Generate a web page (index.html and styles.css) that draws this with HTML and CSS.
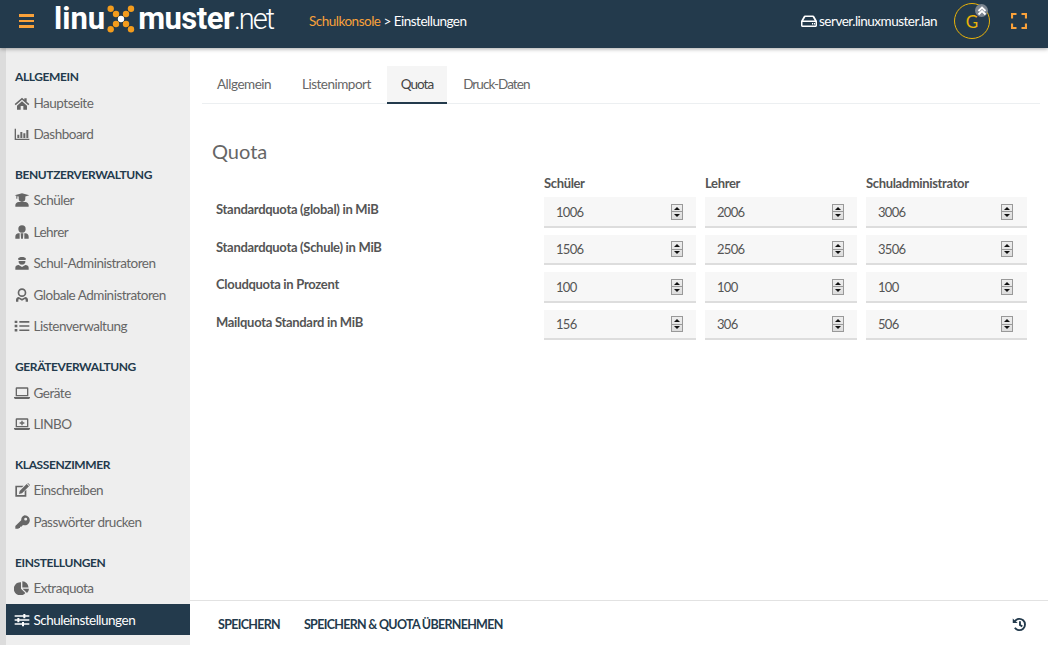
FILE: index.html
```html
<!DOCTYPE html>
<html lang="de">
<head>
<meta charset="utf-8">
<title>Schulkonsole</title>
<link rel="stylesheet" href="styles.css">
</head>
<body>
<svg class="defs" width="0" height="0" aria-hidden="true">
  <symbol id="i-home" viewBox="0 0 24 20"><path d="M12 2 1 11.500l1.500 1.700L12 5l9.500 8.200 1.500-1.700-4-3.500V3h-3.500v2zM4.500 14v6h5.500v-5.500h4V20h5.500v-6L12 7.500z"/></symbol>
  <symbol id="i-chart" viewBox="0 0 24 20"><path d="M1 2h2v15h20v2H1zM5 11h3v5H5zM9.500 7h3v9h-3zM14 9h3v7h-3zM18.500 4h3v12h-3z"/></symbol>
  <symbol id="i-grad" viewBox="0 0 24 20"><path d="M12 0 1 3l2.500.8V8h1.500V4.300l2 .6v3a5 5 0 0 0 10 0v-3L23 3zM2 20v-2c0-3 2.500-5 5-5h10c2.500 0 5 2 5 5v2z"/></symbol>
  <symbol id="i-tie" viewBox="0 0 24 20"><circle cx="12" cy="5.500" r="5.500"/><path d="M2 20v-3c0-3 2-5 5-5h1.500v8zM10 12h4l-.6 8h-2.800zM15.500 12H17c3 0 5 2 5 5v3h-6.500z"/></symbol>
  <symbol id="i-sadm" viewBox="0 0 24 20"><path d="M6 4c1-4 11-4 12 0l-1 1.500H7zM7 7h10c.5 4-2.500 5.500-5 5.500S6.500 11 7 7zM2 20v-3c0-2.500 2-4 5-4l5 3 5-3c3 0 5 1.500 5 4v3z"/></symbol>
  <symbol id="i-gadm" viewBox="0 0 24 20"><path fill-rule="evenodd" d="M12 0a6.500 6.500 0 1 1 0 13 6.500 6.500 0 0 1 0-13zm0 2.500a4 4 0 1 0 0 8 4 4 0 0 0 0-8zM3 20v-3c0-2 1.500-3.500 4-4l5 2.500 5-2.500c2.500.5 4 2 4 4v3h-3.500v-3l-1-1-4.500 2.500L7.500 16l-1 1v3z"/></symbol>
  <symbol id="i-list" viewBox="0 0 24 20"><path d="M1 2h4v3.500H1zM1 8.300h4v3.500H1zM1 14.600h4v3.500H1zM8 2.500h15v2.500H8zM8 8.800h15v2.500H8zM8 15.100h15v2.500H8z"/></symbol>
  <symbol id="i-laptop" viewBox="0 0 24 20"><path fill-rule="evenodd" d="M4 1.500h16a1.500 1.500 0 0 1 1.500 1.500v12h-19V3A1.500 1.500 0 0 1 4 1.500zm.5 2v9.500h15V3.500zM0 16h24v1.500L22.500 19h-21L0 17.500z"/></symbol>
  <symbol id="i-linbo" viewBox="0 0 24 20"><path fill-rule="evenodd" d="M4 1.500h16a1.500 1.500 0 0 1 1.500 1.500v12h-19V3A1.500 1.500 0 0 1 4 1.500zm.5 2v9.500h15V3.500zM0 16h24v1.500L22.500 19h-21L0 17.500zM11 5h2v2.500h2.500v2H13V12h-2V9.500H8.500v-2H11z"/></symbol>
  <symbol id="i-edit" viewBox="0 0 24 20"><path d="M2 3.500h12.500l-2.500 2.500H4.500v11.500H16V12l2.500-2.500V20H2zM19 1l3.500 3.500L12 15l-4.500 1 1-4.500zM20 0l1-.5 3.300 3.300-.8 1z"/></symbol>
  <symbol id="i-key" viewBox="0 0 24 20"><path fill-rule="evenodd" d="M16 0a7.500 7.500 0 1 1-2.500 14.500L11 17H9v2H7v1H2v-4l8.800-8.800A7.500 7.500 0 0 1 16 0zm1.500 3.500a2.200 2.200 0 1 0 0 4.400 2.200 2.200 0 0 0 0-4.400z"/></symbol>
  <symbol id="i-pie" viewBox="0 0 24 20"><path d="M10.500 1.500V11l6.500 6.500A9.800 9.800 0 1 1 10.500 1.500zM12.500 0a9.300 9.300 0 0 1 9.300 9.300h-9.300zM13 11h9.500a9.800 9.800 0 0 1-3 6.500z"/></symbol>
  <symbol id="i-sliders" viewBox="0 0 24 20"><path d="M1 3h13V1h3v2h6v2.200h-6v2h-3v-2H1zM1 9h4V7h3v2h15v2.200H8v2H5v-2H1zM1 15h11v-2h3v2h8v2.200h-8v2h-3v-2H1z"/></symbol>
  <symbol id="i-dot" viewBox="0 0 24 20"><circle cx="12" cy="10" r="10"/></symbol>
</svg>

<header class="topbar">
  <div class="burger" aria-label="Menü"><span></span><span></span><span></span></div>
  <div class="logo">
    <span class="logo-bold">linu</span>
    <svg class="logo-x" viewBox="0 0 32 32" width="32" height="32" aria-hidden="true">
      <path class="logo-line" d="M4.700 5.700 25 26.300M25 5.700 4.700 26.300"/>
      <circle class="dot" cx="4.700" cy="5.700" r="3.200"/><circle class="dot" cx="25" cy="5.700" r="3.200"/>
      <circle class="dot" cx="10" cy="11" r="3.200"/><circle class="dot" cx="20" cy="11" r="3.200"/>
      <circle class="dot-w" cx="15" cy="16" r="3.200"/>
      <circle class="dot" cx="10" cy="21" r="3.200"/><circle class="dot" cx="20" cy="21" r="3.200"/>
      <circle class="dot" cx="4.700" cy="26.300" r="3.200"/><circle class="dot" cx="25" cy="26.300" r="3.200"/>
    </svg>
    <span class="logo-bold logo-muster">muster</span><span class="logo-light">.net</span>
  </div>
  <div class="crumb"><span class="crumb-link">Schulkonsole</span> &gt; Einstellungen</div>
  <div class="server">
    <svg class="server-icon" viewBox="0 0 16 12" width="16" height="12" aria-hidden="true"><path fill-rule="evenodd" d="M4 .5h8c.6 0 1 .3 1.300.8L16 6v4.500c0 .8-.7 1.500-1.500 1.500h-13C.7 12 0 11.300 0 10.500V6l2.700-4.700C3 .8 3.400.5 4 .5zm.4 1.500L2.300 5.500h11.400L11.600 2zM1.500 7v3.500h13V7zm9.500 1h1.200v1.500H11zm2 0h1v1.500h-1z"/></svg>
    server.linuxmuster.lan
  </div>
  <div class="avatar">G
    <span class="badge"><svg viewBox="0 0 10 10" width="10" height="10" aria-hidden="true"><path d="M1.500 5 5 1.500 8.500 5M1.500 8.500 5 5l3.500 3.500"/></svg></span>
  </div>
  <svg class="expand" viewBox="0 0 16 16" width="16" height="16" aria-hidden="true"><path d="M1 5.500V1h4.500M10.500 1H15v4.500M15 10.500V15h-4.500M5.500 15H1v-4.500"/></svg>
</header>

<div class="layout">
  <nav class="sidebar">
    <div class="group">
      <h4 class="group-title">ALLGEMEIN</h4>
      <a class="item"><svg class="ico"><use href="#i-home"/></svg>Hauptseite</a>
      <a class="item"><svg class="ico"><use href="#i-chart"/></svg>Dashboard</a>
    </div>
    <div class="group">
      <h4 class="group-title">BENUTZERVERWALTUNG</h4>
      <a class="item"><svg class="ico"><use href="#i-grad"/></svg>Schüler</a>
      <a class="item"><svg class="ico"><use href="#i-tie"/></svg>Lehrer</a>
      <a class="item"><svg class="ico"><use href="#i-sadm"/></svg>Schul-Administratoren</a>
      <a class="item"><svg class="ico"><use href="#i-gadm"/></svg>Globale Administratoren</a>
      <a class="item"><svg class="ico"><use href="#i-list"/></svg>Listenverwaltung</a>
    </div>
    <div class="group">
      <h4 class="group-title">GERÄTEVERWALTUNG</h4>
      <a class="item"><svg class="ico"><use href="#i-laptop"/></svg>Geräte</a>
      <a class="item"><svg class="ico"><use href="#i-linbo"/></svg>LINBO</a>
    </div>
    <div class="group">
      <h4 class="group-title">KLASSENZIMMER</h4>
      <a class="item"><svg class="ico"><use href="#i-edit"/></svg>Einschreiben</a>
      <a class="item"><svg class="ico"><use href="#i-key"/></svg>Passwörter drucken</a>
    </div>
    <div class="group">
      <h4 class="group-title">EINSTELLUNGEN</h4>
      <a class="item"><svg class="ico"><use href="#i-pie"/></svg>Extraquota</a>
      <a class="item active"><svg class="ico"><use href="#i-sliders"/></svg>Schuleinstellungen</a>
      <a class="item"><svg class="ico ico-next"><use href="#i-dot"/></svg></a>
    </div>
  </nav>

  <main class="content">
    <div class="scroll">
      <div class="tabs">
        <a class="tab">Allgemein</a>
        <a class="tab">Listenimport</a>
        <a class="tab current">Quota</a>
        <a class="tab">Druck-Daten</a>
      </div>
      <h2 class="title">Quota</h2>
      <div class="quota">
        <div></div>
        <div class="col-head">Schüler</div>
        <div class="col-head">Lehrer</div>
        <div class="col-head">Schuladministrator</div>

        <div class="row-label">Standardquota (global) in MiB</div>
        <label class="field"><input class="num" type="text" value="1006"><span class="spin"></span></label>
        <label class="field"><input class="num" type="text" value="2006"><span class="spin"></span></label>
        <label class="field wide"><input class="num" type="text" value="3006"><span class="spin"></span></label>

        <div class="row-label">Standardquota (Schule) in MiB</div>
        <label class="field"><input class="num" type="text" value="1506"><span class="spin"></span></label>
        <label class="field"><input class="num" type="text" value="2506"><span class="spin"></span></label>
        <label class="field wide"><input class="num" type="text" value="3506"><span class="spin"></span></label>

        <div class="row-label">Cloudquota in Prozent</div>
        <label class="field"><input class="num" type="text" value="100"><span class="spin"></span></label>
        <label class="field"><input class="num" type="text" value="100"><span class="spin"></span></label>
        <label class="field wide"><input class="num" type="text" value="100"><span class="spin"></span></label>

        <div class="row-label">Mailquota Standard in MiB</div>
        <label class="field"><input class="num" type="text" value="156"><span class="spin"></span></label>
        <label class="field"><input class="num" type="text" value="306"><span class="spin"></span></label>
        <label class="field wide"><input class="num" type="text" value="506"><span class="spin"></span></label>
      </div>
    </div>
    <footer class="actions">
      <button class="action" type="button">SPEICHERN</button>
      <button class="action" type="button">SPEICHERN &amp; QUOTA ÜBERNEHMEN</button>
      <svg class="history" viewBox="0 0 16 16" width="15" height="15" aria-hidden="true"><path class="history-arc" d="M3 4.500A6 6 0 1 1 3 11.500"/><path class="history-hand" d="M8.500 4.500V8.500L11 10"/><path class="history-tip" d="M.8 1.500 6 6.500H.8z"/></svg>
    </footer>
  </main>
</div>
</body>
</html>
```
FILE: styles.css
```css
* { box-sizing: border-box; }
html, body { height: 100%; }
body {
  margin: 0;
  overflow: hidden;
  background: #fff;
  color: #555;
  font-family: "Lato", "Liberation Sans", sans-serif;
  font-size: 13.500px;
  letter-spacing: -.5px;
  display: flex;
  flex-direction: column;
}
.defs { position: absolute; }

.topbar {
  height: 48px;
  flex: none;
  display: flex;
  align-items: center;
  background: #233a4c;
  color: #fff;
  position: relative;
  z-index: 2;
  box-shadow: 0 1px 4px rgba(0,0,0,.35);
  padding: 0 21px 6px 19px;
}
.burger { width: 15px; display: flex; flex-direction: column; gap: 3px; }
.burger span { height: 2.500px; background: #f9a13a; }
.logo {
  display: flex;
  align-items: center;
  margin: 0 0 4px 20px;
  width: 255px;
  height: 42px;
  color: #fff;
  font-size: 31px;
  line-height: 42px;
  letter-spacing: 0;
}
.logo-bold { font-family: "Roboto", sans-serif; font-weight: 700; }
.logo-muster { letter-spacing: -.5px; }
.logo-light { font-family: "Roboto", sans-serif; font-weight: 300; font-size: 29px; letter-spacing: -2px; }
.logo-x { margin: 0 0 0 1px; flex: none; }
.logo-line { stroke: #172a39; stroke-width: 3; fill: none; }
.dot { fill: #f39c1d; }
.dot-w { fill: #fff; }
.crumb-link { color: #f9a13a; }
.server { margin-left: auto; display: flex; align-items: center; gap: 2px; }
.server-icon { fill: #fff; }
.avatar {
  position: relative;
  width: 36px;
  height: 36px;
  margin-left: 17px;
  border: 1px solid #eab308;
  border-radius: 50%;
  color: #eab308;
  font-size: 17px;
  letter-spacing: 0;
  display: flex;
  align-items: center;
  justify-content: center;
}
.badge {
  position: absolute;
  top: 0;
  right: 1px;
  width: 13px;
  height: 13px;
  border-radius: 50%;
  background: #7b8590;
  display: flex;
  align-items: center;
  justify-content: center;
}
.badge path { stroke: #fff; stroke-width: 1.800; fill: none; }
.expand { margin-left: 21px; }
.expand path { stroke: #f9a13a; stroke-width: 2.200; fill: none; }

.layout { flex: 1; min-height: 0; display: flex; }
.sidebar {
  width: 190px;
  flex: none;
  border-left: 6px solid #dcdcdc;
  background: #eee;
  padding-top: 19px;
  overflow: hidden;
}
.group { margin-bottom: 15px; }
.group-title {
  margin: 0;
  height: 19.750px;
  line-height: 20px;
  padding-left: 9px;
  font-size: 12px;
  letter-spacing: -.4px;
  font-weight: 700;
  color: #233a4c;
}
.item {
  height: 31.500px;
  display: flex;
  align-items: center;
  padding-left: 8px;
  gap: 3.500px;
  color: #666;
}
.ico { width: 16px; height: 14px; fill: #666; flex: none; }
.item .ico-next { height: 13px; fill: #d08a85; }
.item.active { background: #233a4c; color: #fff; }
.item.active .ico { fill: #fff; }

.content { flex: 1; min-width: 0; display: flex; flex-direction: column; }
.scroll { flex: 1; min-height: 0; padding: 18px 8px 0 12px; }
.tabs { display: flex; gap: 1px; border-bottom: 1px solid #eceff1; height: 38px; }
.tab { padding: 0 15px; line-height: 37px; color: #666; height: 38px; }
.tab:last-child { letter-spacing: -.95px; }
.tab.current { padding: 0 14px; letter-spacing: -1px; background: #f5f5f5; border-bottom: 2px solid #233a4c; color: #444; }
.title { margin: 33px 0 0 10px; font-size: 20px; line-height: 28px; font-weight: 400; color: #666; letter-spacing: 0; }
.quota {
  display: grid;
  grid-template-columns: 319px 152px 152px 161px;
  grid-template-rows: 14px;
  grid-auto-rows: 30.500px;
  column-gap: 9px;
  row-gap: 7px;
  margin: 11px 0 0 14px;
}
.col-head { font-size: 13px; font-weight: 700; color: #555; line-height: 14px; letter-spacing: -.35px; }
.row-label { font-size: 13px; font-weight: 700; color: #555; line-height: 25px; letter-spacing: -.3px; }
.field {
  display: flex;
  align-items: center;
  height: 30.500px;
  padding: 1px 13px 0 12px;
  border-bottom: 2px solid #ddd;
  background: #f7f7f7;
}
.field.wide { padding-right: 14px; }
.num {
  flex: 1;
  min-width: 0;
  padding: 0;
  border: 0;
  background: none;
  font: inherit;
  font-size: 13px;
  letter-spacing: -.7px;
  color: #555;
  outline: none;
}
.spin {
  width: 12px;
  height: 16px;
  flex: none;
  border: 1px solid #999;
  background:
    linear-gradient(#999, #999) 0 50% / 100% 1px no-repeat,
    linear-gradient(#eee, #ddd);
  position: relative;
}
.spin::before, .spin::after {
  content: "";
  position: absolute;
  left: 2px;
  border-left: 3px solid transparent;
  border-right: 3px solid transparent;
}
.spin::before { top: 2px; border-bottom: 3px solid #111; }
.spin::after { bottom: 2px; border-top: 3px solid #111; }

.actions {
  flex: none;
  height: 45px;
  border-top: 1px solid #e2e2e2;
  display: flex;
  align-items: center;
  padding: 2px 21px 0 28px;
  gap: 24px;
  background: #fff;
}
.action {
  border: 0;
  background: none;
  padding: 0;
  font: inherit;
  font-size: 12.500px;
  letter-spacing: -.7px;
  font-weight: 700;
  color: #233a4c;
}
.history { margin-left: auto; }
.history-arc, .history-hand { fill: none; stroke: #233a4c; stroke-width: 2; }
.history-tip { fill: #233a4c; }
```
